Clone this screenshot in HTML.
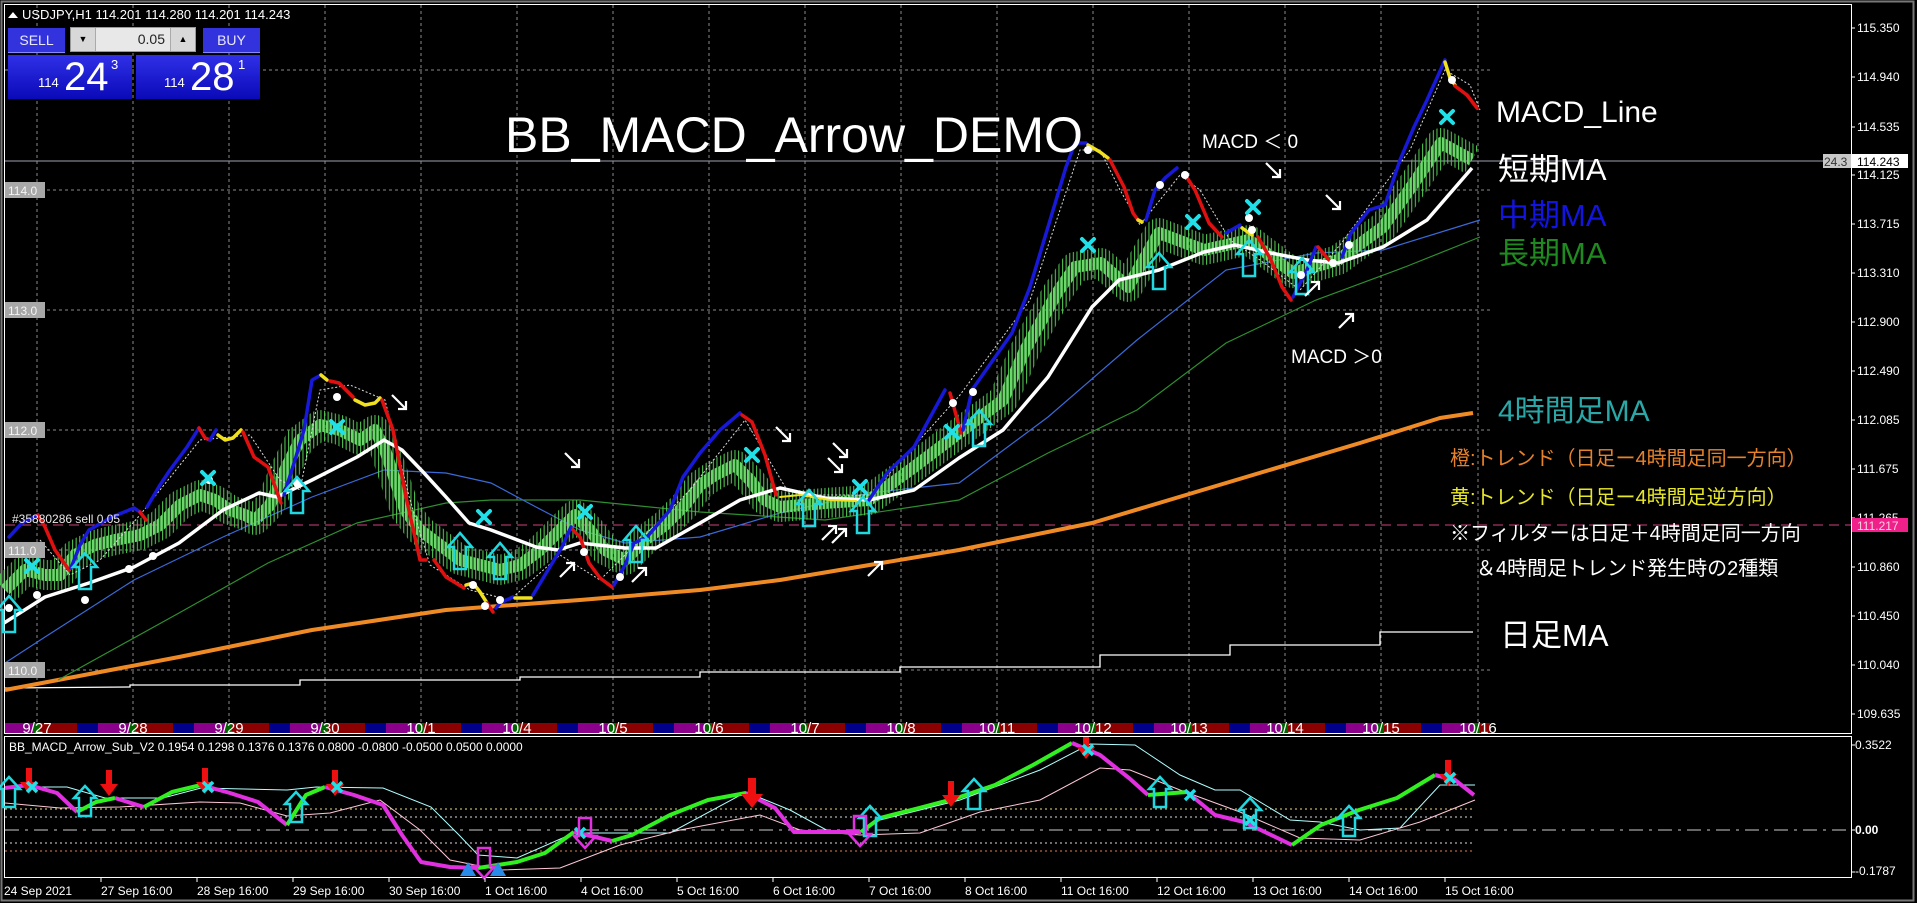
<!DOCTYPE html>
<html><head><meta charset="utf-8">
<style>
html,body{margin:0;padding:0;background:#000;width:1917px;height:903px;overflow:hidden}
svg{position:absolute;left:0;top:0}
.t{font-family:"Liberation Sans","Noto Sans CJK JP",sans-serif}
#panel{position:absolute;left:8px;top:27px;width:252px;height:72px;font-family:"Liberation Sans",sans-serif}
.btn{position:absolute;background:#3333dd;color:#e8e8ff;font-size:14px;text-align:center;line-height:24px;border-bottom:1px solid #8888ff}
.big{position:absolute;top:28px;height:44px;background:linear-gradient(#3030e8,#0a0ab8);color:#fff}
</style></head><body>
<svg width="1917" height="903" viewBox="0 0 1917 903" xmlns="http://www.w3.org/2000/svg">
<defs>
<pattern id="band" x="2" y="0" width="96" height="20" patternUnits="userSpaceOnUse">
<rect x="0" y="0" width="31" height="20" fill="#8a008a"/>
<rect x="31" y="0" width="7" height="20" fill="#006400"/>
<rect x="38" y="0" width="37" height="20" fill="#8b0000"/>
<rect x="75" y="0" width="21" height="20" fill="#00008b"/>
</pattern>
<pattern id="vs" x="0" y="0" width="3.6" height="7" patternUnits="userSpaceOnUse">
<rect x="0" y="0" width="1.1" height="7" fill="#4fbf4f"/>
</pattern>
<pattern id="vs2" x="1.8" y="0" width="3.6" height="9" patternUnits="userSpaceOnUse">
<rect x="0" y="0" width="2.2" height="9" fill="#6ad86a"/>
</pattern>
</defs>
<rect x="4.5" y="4.5" width="1847" height="729" fill="none" stroke="#fff" stroke-width="1"/>
<rect x="4.5" y="736.5" width="1847" height="141" fill="none" stroke="#fff" stroke-width="1"/>
<rect x="1.5" y="1.5" width="1912" height="899" fill="none" stroke="#777" stroke-width="2"/>
<g stroke="#8a8a8a" stroke-width="1" stroke-dasharray="3,3">
<line x1="37" y1="5" x2="37" y2="722"/><line x1="133" y1="5" x2="133" y2="722"/><line x1="229" y1="5" x2="229" y2="722"/><line x1="325" y1="5" x2="325" y2="722"/><line x1="421" y1="5" x2="421" y2="722"/><line x1="517" y1="5" x2="517" y2="722"/><line x1="613" y1="5" x2="613" y2="722"/><line x1="709" y1="5" x2="709" y2="722"/><line x1="805" y1="5" x2="805" y2="722"/><line x1="901" y1="5" x2="901" y2="722"/><line x1="997" y1="5" x2="997" y2="722"/><line x1="1093" y1="5" x2="1093" y2="722"/><line x1="1189" y1="5" x2="1189" y2="722"/><line x1="1285" y1="5" x2="1285" y2="722"/><line x1="1381" y1="5" x2="1381" y2="722"/><line x1="1478" y1="5" x2="1478" y2="722"/>
<line x1="5" y1="70" x2="1490" y2="70"/><line x1="5" y1="190" x2="1490" y2="190"/><line x1="5" y1="310" x2="1490" y2="310"/><line x1="5" y1="430" x2="1490" y2="430"/><line x1="5" y1="550" x2="1490" y2="550"/><line x1="5" y1="670" x2="1490" y2="670"/>
</g>
<line x1="5" y1="161" x2="1851" y2="161" stroke="#a0a0b0" stroke-width="1"/>
<line x1="5" y1="525" x2="1851" y2="525" stroke="#d04080" stroke-width="1" stroke-dasharray="10,6"/>
<rect x="5" y="723" width="1485" height="10" fill="url(#band)"/>
<polyline fill="none" stroke="#fff" stroke-width="1.3" points="5,688 130,687 130,685 300,685 300,680 520,680 520,677 700,677 700,672 900,672 900,667 1100,667 1100,655 1230,655 1230,645 1380,645 1380,632 1473,632"/>
<polyline fill="none" stroke="#f08a24" stroke-width="4" stroke-linejoin="round" points="5,690 58,680 179,657 312,630 446,610 580,600 700,590 780,580 959,550 1092,523 1226,483 1360,443 1440,418 1473,413"/>
<polyline fill="none" stroke="#2f8f2f" stroke-width="1.2" points="58,680 179,613 268,563 357,523 446,503 491,500 580,500 700,512 825,520 959,500 1048,453 1137,410 1226,343 1316,300 1405,267 1480,237"/>
<polyline fill="none" stroke="#3a6ad8" stroke-width="1.2" points="5,663 45,637 134,580 223,537 312,497 384,470 446,473 491,483 536,507 580,530 625,543 700,537 780,513 869,493 959,483 1048,417 1137,340 1226,270 1316,253 1383,250 1480,220"/>
<polyline fill="none" stroke="url(#vs)" stroke-width="30" stroke-linejoin="round" points="5,590 25,570 45,575 60,575 75,555 95,545 115,540 140,535 160,525 180,505 200,495 215,500 230,510 245,515 255,520 270,505 285,470 300,440 320,425 340,430 360,440 375,430 385,450 395,480 405,510 420,530 440,545 460,560 480,565 500,570 520,565 540,550 560,530 575,515 590,530 605,550 625,560 645,540 665,525 685,505 700,485 715,475 735,465 750,480 765,500 780,507 825,503 869,500 914,467 959,433 1003,400 1025,350 1057,293 1075,267 1101,263 1128,287 1159,233 1204,250 1249,240 1293,273 1338,260 1383,227 1414,183 1441,143 1472,160"/>
<polyline fill="none" stroke="url(#vs2)" stroke-width="12" stroke-linejoin="round" points="5,590 25,570 45,575 60,575 75,555 95,545 115,540 140,535 160,525 180,505 200,495 215,500 230,510 245,515 255,520 270,505 285,470 300,440 320,425 340,430 360,440 375,430 385,450 395,480 405,510 420,530 440,545 460,560 480,565 500,570 520,565 540,550 560,530 575,515 590,530 605,550 625,560 645,540 665,525 685,505 700,485 715,475 735,465 750,480 765,500 780,507 825,503 869,500 914,467 959,433 1003,400 1025,350 1057,293 1075,267 1101,263 1128,287 1159,233 1204,250 1249,240 1293,273 1338,260 1383,227 1414,183 1441,143 1472,160"/>
<polyline fill="none" stroke="#fff" stroke-width="3.5" stroke-linejoin="round" points="4,623 45,597 89,583 134,567 179,543 223,510 259,493 277,497 312,480 357,457 384,440 402,450 424,473 446,497 469,523 491,530 536,547 558,550 580,543 625,548 656,548 700,523 740,500 780,488 825,498 869,500 914,490 959,458 1003,430 1048,377 1092,307 1119,280 1159,270 1204,252 1235,245 1271,253 1307,260 1338,263 1383,247 1427,220 1472,168"/>
<polyline fill="none" stroke="#ddd" stroke-width="1" stroke-dasharray="2,2" points="40,540 70,575 100,560 140,515 200,440 250,435 280,480 300,490 320,390 350,385 385,400 410,500 430,565 470,590 510,600 560,555 600,580 640,540 690,490 745,420 790,495 870,495 960,395 1030,300 1080,150 1100,150 1120,190 1140,225 1180,175 1200,190 1230,240 1260,260 1300,290 1340,245 1410,150 1445,70 1470,85 1480,110"/>
<g fill="none" stroke-width="3.5" stroke-linejoin="round" stroke-linecap="round">
<polyline stroke="#1818d8" points="9,537 22,523 38,515"/>
<polyline stroke="#e01010" points="38,515 45,527 55,550 69,570"/>
<polyline stroke="#1818d8" points="71,568 80,545 89,530 112,517 134,508 140,512"/>
<polyline stroke="#e01010" points="140,512 146,520"/>
<polyline stroke="#1818d8" points="147,507 160,485 170,470 187,447 199,428"/>
<polyline stroke="#e01010" points="199,428 205,438 210,440"/>
<polyline stroke="#1818d8" points="210,440 216,430"/>
<polyline stroke="#f0e020" points="218,435 225,440 233,438 241,430"/>
<polyline stroke="#e01010" points="243,432 254,457 268,467 281,503"/>
<polyline stroke="#1818d8" points="284,495 295,460 304,430 312,380 321,375"/>
<polyline stroke="#f0e020" points="321,375 327,380"/>
<polyline stroke="#e01010" points="330,381 339,383 353,397"/>
<polyline stroke="#f0e020" points="355,400 365,405 375,403 380,398"/>
<polyline stroke="#e01010" points="382,400 393,430 406,497 420,560 426,560"/>
<polyline stroke="#e01010" points="434,560 446,577 464,588"/>
<polyline stroke="#f0e020" points="466,585 473,583 480,592 487,603"/>
<polyline stroke="#e01010" points="487,603 493,612"/>
<polyline stroke="#1818d8" points="496,608 500,603 513,597"/>
<polyline stroke="#f0e020" points="515,598 531,598"/>
<polyline stroke="#1818d8" points="533,595 545,575 562,547 571,527"/>
<polyline stroke="#e01010" points="573,530 580,537 589,563 600,578 612,587"/>
<polyline stroke="#1818d8" points="614,585 625,565 634,543 647,537 670,510 683,477 700,453 720,430 740,413"/>
<polyline stroke="#e01010" points="742,415 752,422 765,455 776,495"/>
<polyline stroke="#f0e020" points="780,497 800,495 830,500 856,501" stroke-width="2"/>
<polyline stroke="#1818d8" points="869,500 887,473 914,447 945,390"/>
<polyline stroke="#e01010" points="950,393 961,433"/>
<polyline stroke="#1818d8" points="963,430 972,390 1012,333 1030,287 1048,227 1066,167 1075,143 1086,143"/>
<polyline stroke="#f0e020" points="1088,145 1100,152 1108,158"/>
<polyline stroke="#e01010" points="1110,160 1124,187 1133,213 1138,220"/>
<polyline stroke="#f0e020" points="1138,220 1142,222"/>
<polyline stroke="#1818d8" points="1146,220 1155,190 1165,178 1177,168"/>
<polyline stroke="#e01010" points="1184,173 1195,190 1209,223 1222,237"/>
<polyline stroke="#1818d8" points="1226,233 1240,225"/>
<polyline stroke="#f0e020" points="1242,228 1252,235"/>
<polyline stroke="#e01010" points="1258,237 1271,260 1282,287 1291,300"/>
<polyline stroke="#1818d8" points="1293,297 1307,270 1316,247"/>
<polyline stroke="#e01010" points="1318,247 1329,260"/>
<polyline stroke="#1818d8" points="1342,257 1351,233 1369,210 1385,205 1400,160 1414,127 1427,100 1445,60"/>
<polyline stroke="#f0e020" points="1445,62 1450,78 1455,85"/>
<polyline stroke="#e01010" points="1455,86 1467,95 1477,108"/>
</g>
<g fill="#fff">
<circle cx="9" cy="608" r="4"/><circle cx="37" cy="595" r="4"/><circle cx="85" cy="600" r="4"/><circle cx="129" cy="569" r="4"/><circle cx="153" cy="556" r="4"/><circle cx="209" cy="480" r="4"/><circle cx="297" cy="483" r="4"/><circle cx="337" cy="397" r="4"/><circle cx="473" cy="585" r="4"/><circle cx="485" cy="606" r="4"/><circle cx="500" cy="600" r="4"/><circle cx="620" cy="577" r="4"/><circle cx="584" cy="552" r="4"/><circle cx="953" cy="403" r="4"/><circle cx="973" cy="392" r="4"/><circle cx="1088" cy="150" r="4"/><circle cx="1160" cy="185" r="4"/><circle cx="1185" cy="175" r="4"/><circle cx="1249" cy="218" r="4"/><circle cx="1252" cy="230" r="4"/><circle cx="1301" cy="275" r="4"/><circle cx="1349" cy="245" r="4"/><circle cx="1333" cy="263" r="4"/><circle cx="1452" cy="80" r="4"/>
</g>
<g stroke="#20e0e8" stroke-width="4" stroke-linecap="round">
<path d="M26,560l12,12M38,560l-12,12"/><path d="M202,472l12,12M214,472l-12,12"/><path d="M331,421l12,12M343,421l-12,12"/><path d="M478,511l12,12M490,511l-12,12"/><path d="M579,506l12,12M591,506l-12,12"/><path d="M746,449l12,12M758,449l-12,12"/><path d="M854,481l12,12M866,481l-12,12"/><path d="M946,426l12,12M958,426l-12,12"/><path d="M1082,239l12,12M1094,239l-12,12"/><path d="M1187,216l12,12M1199,216l-12,12"/><path d="M1247,201l12,12M1259,201l-12,12"/><path d="M1441,111l12,12M1453,111l-12,12"/>
</g>
<g fill="none" stroke="#20d8e0" stroke-width="2.5">
<path d="M0,0 l12,14 h-6 v22 h-12 v-22 h-6 z" transform="translate(9,596)"/>
<path d="M0,0 l12,14 h-6 v22 h-12 v-22 h-6 z" transform="translate(85,553)"/>
<path d="M0,0 l12,14 h-6 v22 h-12 v-22 h-6 z" transform="translate(297,477)"/>
<path d="M0,0 l12,14 h-6 v22 h-12 v-22 h-6 z" transform="translate(460,533)"/>
<path d="M0,0 l12,14 h-6 v22 h-12 v-22 h-6 z" transform="translate(500,543)"/>
<path d="M0,0 l12,14 h-6 v22 h-12 v-22 h-6 z" transform="translate(636,526)"/>
<path d="M0,0 l12,14 h-6 v22 h-12 v-22 h-6 z" transform="translate(809,490)"/>
<path d="M0,0 l12,14 h-6 v22 h-12 v-22 h-6 z" transform="translate(863,497)"/>
<path d="M0,0 l12,14 h-6 v22 h-12 v-22 h-6 z" transform="translate(979,410)"/>
<path d="M0,0 l12,14 h-6 v22 h-12 v-22 h-6 z" transform="translate(1159,253)"/>
<path d="M0,0 l12,14 h-6 v22 h-12 v-22 h-6 z" transform="translate(1249,240)"/>
<path d="M0,0 l12,14 h-6 v22 h-12 v-22 h-6 z" transform="translate(1302,258)"/>
</g>
<g stroke="#fff" stroke-width="2.2" fill="none">
<path d="M392,395l14,14m0,-8v8h-8"/><path d="M565,453l14,14m0,-8v8h-8"/><path d="M776,427l14,14m0,-8v8h-8"/><path d="M833,443l14,14m0,-8v8h-8"/><path d="M828,458l14,14m0,-8v8h-8"/><path d="M1266,163l14,14m0,-8v8h-8"/><path d="M1326,195l14,14m0,-8v8h-8"/>
<path d="M560,577l14,-14m-8,0h8v8"/><path d="M632,582l14,-14m-8,0h8v8"/><path d="M822,540l14,-14m-8,0h8v8"/><path d="M832,543l14,-14m-8,0h8v8"/><path d="M868,576l14,-14m-8,0h8v8"/><path d="M1305,296l14,-14m-8,0h8v8"/><path d="M1339,328l14,-14m-8,0h8v8"/>
</g>
<g class="t" font-size="12">
<rect x="5" y="182" width="40" height="16" fill="#a8a8a8"/><text x="8" y="195" fill="#f4f4f4">114.0</text>
<rect x="5" y="302" width="40" height="16" fill="#a8a8a8"/><text x="8" y="315" fill="#f4f4f4">113.0</text>
<rect x="5" y="422" width="40" height="16" fill="#a8a8a8"/><text x="8" y="435" fill="#f4f4f4">112.0</text>
<rect x="5" y="542" width="40" height="16" fill="#a8a8a8"/><text x="8" y="555" fill="#f4f4f4">111.0</text>
<rect x="5" y="662" width="40" height="16" fill="#a8a8a8"/><text x="8" y="675" fill="#f4f4f4">110.0</text>
<text x="12" y="523" fill="#e8e8e8">#35880286 sell 0.05</text>
</g>
<g class="t" font-size="15" fill="#fff" text-anchor="middle">
<text x="37" y="733">9/27</text><text x="133" y="733">9/28</text><text x="229" y="733">9/29</text><text x="325" y="733">9/30</text><text x="421" y="733">10/1</text><text x="517" y="733">10/4</text><text x="613" y="733">10/5</text><text x="709" y="733">10/6</text><text x="805" y="733">10/7</text><text x="901" y="733">10/8</text><text x="997" y="733">10/11</text><text x="1093" y="733">10/12</text><text x="1189" y="733">10/13</text><text x="1285" y="733">10/14</text><text x="1381" y="733">10/15</text><text x="1478" y="733">10/16</text>
</g>
<g class="t" font-size="12" fill="#fff">
<g stroke="#fff"><line x1="1851" y1="28" x2="1855" y2="28"/><line x1="1851" y1="77" x2="1855" y2="77"/><line x1="1851" y1="127" x2="1855" y2="127"/><line x1="1851" y1="175" x2="1855" y2="175"/><line x1="1851" y1="224" x2="1855" y2="224"/><line x1="1851" y1="273" x2="1855" y2="273"/><line x1="1851" y1="322" x2="1855" y2="322"/><line x1="1851" y1="371" x2="1855" y2="371"/><line x1="1851" y1="420" x2="1855" y2="420"/><line x1="1851" y1="469" x2="1855" y2="469"/><line x1="1851" y1="518" x2="1855" y2="518"/><line x1="1851" y1="567" x2="1855" y2="567"/><line x1="1851" y1="616" x2="1855" y2="616"/><line x1="1851" y1="665" x2="1855" y2="665"/><line x1="1851" y1="714" x2="1855" y2="714"/><line x1="1851" y1="745" x2="1855" y2="745"/><line x1="1851" y1="830" x2="1855" y2="830"/><line x1="1851" y1="872" x2="1855" y2="872"/></g>
<text x="1857" y="32">115.350</text><text x="1857" y="81">114.940</text><text x="1857" y="131">114.535</text><text x="1857" y="179">114.125</text><text x="1857" y="228">113.715</text><text x="1857" y="277">113.310</text><text x="1857" y="326">112.900</text><text x="1857" y="375">112.490</text><text x="1857" y="424">112.085</text><text x="1857" y="473">111.675</text><text x="1857" y="522">111.265</text><text x="1857" y="571">110.860</text><text x="1857" y="620">110.450</text><text x="1857" y="669">110.040</text><text x="1857" y="718">109.635</text>
<rect x="1823" y="154" width="28" height="14" fill="#c8c8c8"/><text x="1824" y="166" fill="#333">24.3</text>
<rect x="1852" y="154" width="56" height="14" fill="#fff"/><text x="1857" y="166" fill="#000">114.243</text>
<rect x="1852" y="518" width="56" height="14" fill="#f0208a"/><text x="1857" y="530" fill="#ffd0e0">111.217</text>
<text x="1855" y="749">0.3522</text><text x="1855" y="834" font-weight="bold">0.00</text><text x="1855" y="875">-0.1787</text>
</g>
<g stroke-width="1">
<line x1="5" y1="809" x2="1475" y2="809" stroke="#f0e080" stroke-dasharray="2,3"/>
<line x1="5" y1="817" x2="1475" y2="817" stroke="#ddd" stroke-dasharray="2,3"/>
<line x1="5" y1="830" x2="1851" y2="830" stroke="#ccc" stroke-dasharray="14,6,3,6"/>
<line x1="5" y1="843" x2="1475" y2="843" stroke="#ddd" stroke-dasharray="2,3"/>
<line x1="5" y1="851" x2="1475" y2="851" stroke="#e08050" stroke-dasharray="2,3"/>
</g>
<polyline fill="none" stroke="#b0ffff" stroke-width="1" points="5,787 67,787 105,798 163,798 201,788 287,790 316,787 383,788 431,807 459,835 478,855 517,858 574,833 670,833 746,792 790,810 830,832 860,832 880,820 960,800 1040,770 1090,744 1135,745 1180,775 1215,790 1240,790 1290,820 1320,822 1360,830 1400,828 1440,785 1475,785"/>
<polyline fill="none" stroke="#ffc8d8" stroke-width="1" points="5,803 60,808 120,807 200,802 240,803 287,816 330,813 380,800 420,830 450,860 500,870 560,868 620,845 680,830 760,815 800,830 860,835 920,833 980,812 1040,800 1100,768 1130,770 1180,790 1240,812 1300,838 1360,840 1420,822 1475,800"/>
<g fill="none" stroke-width="4" stroke-linejoin="round">
<polyline stroke="#e030e0" points="5,788 29,785 57,793 77,812"/>
<polyline stroke="#30f020" points="77,812 96,802 115,798"/>
<polyline stroke="#e030e0" points="115,798 144,807"/>
<polyline stroke="#30f020" points="144,807 172,792 201,785"/>
<polyline stroke="#e030e0" points="201,785 230,793 258,802 287,825"/>
<polyline stroke="#30f020" points="287,825 306,795 325,787"/>
<polyline stroke="#e030e0" points="325,787 354,795 383,805 402,835 421,862 450,867 478,868"/>
<polyline stroke="#30f020" points="478,868 517,862 545,853 574,832"/>
<polyline stroke="#e030e0" points="574,832 612,841"/>
<polyline stroke="#30f020" points="612,841 632,835 670,815 708,800 746,793"/>
<polyline stroke="#e030e0" points="746,793 775,808 794,832 832,832 861,832"/>
<polyline stroke="#30f020" points="861,832 880,818 919,808 957,798 995,785 1033,765 1072,743"/>
<polyline stroke="#e030e0" points="1072,743 1100,755 1129,778 1148,795"/>
<polyline stroke="#30f020" points="1148,795 1187,792"/>
<polyline stroke="#e030e0" points="1187,792 1215,815 1244,822 1292,845"/>
<polyline stroke="#30f020" points="1292,845 1321,825 1359,810 1397,798 1435,775"/>
<polyline stroke="#e030e0" points="1435,775 1455,780 1474,795"/>
</g>
<g fill="#ee1010">
<path d="M26,768h6v14h6l-9,12l-9,-12h6z"/><path d="M106,770h6v14h6l-9,12l-9,-12h6z"/><path d="M202,768h6v14h6l-9,12l-9,-12h6z"/><path d="M332,770h6v14h6l-9,12l-9,-12h6z"/><path d="M748,778h8v16h7l-11,14l-11,-14h7z"/><path d="M948,781h6v14h6l-9,12l-9,-12h6z"/><path d="M1083,737h6v10h6l-9,12l-9,-12h6z"/><path d="M1445,760h6v14h6l-9,12l-9,-12h6z"/>
</g>
<g stroke="#20e0e8" stroke-width="3.5">
<path d="M27,782l10,10M37,782l-10,10"/><path d="M203,782l10,10M213,782l-10,10"/><path d="M332,782l10,10M342,782l-10,10"/><path d="M1083,745l10,10M1093,745l-10,10"/><path d="M1185,790l10,10M1195,790l-10,10"/><path d="M1245,815l10,10M1255,815l-10,10"/><path d="M1445,773l10,10M1455,773l-10,10"/><path d="M575,828l10,10M585,828l-10,10"/>
</g>
<g fill="none" stroke="#20d8e0" stroke-width="2.5">
<path d="M0,0 l11,12 h-5 v18 h-12 v-18 h-5 z" transform="translate(85,786)"/>
<path d="M0,0 l11,12 h-5 v18 h-12 v-18 h-5 z" transform="translate(296,792)"/>
<path d="M0,0 l11,12 h-5 v18 h-12 v-18 h-5 z" transform="translate(974,779)"/>
<path d="M0,0 l11,12 h-5 v18 h-12 v-18 h-5 z" transform="translate(870,806)"/>
<path d="M0,0 l11,12 h-5 v18 h-12 v-18 h-5 z" transform="translate(1160,777)"/>
<path d="M0,0 l11,12 h-5 v18 h-12 v-18 h-5 z" transform="translate(1250,798)"/>
<path d="M0,0 l11,12 h-5 v18 h-12 v-18 h-5 z" transform="translate(1349,806)"/>
<path d="M0,0 l11,12 h-5 v18 h-12 v-18 h-5 z" transform="translate(9,777)"/>
</g>
<g fill="none" stroke="#e030e0" stroke-width="2.5">
<path d="M0,0 l-11,-12 h5 v-18 h12 v18 h5 z" transform="translate(585,848)"/>
<path d="M0,0 l-11,-12 h5 v-18 h12 v18 h5 z" transform="translate(860,846)"/>
<path d="M0,0 l-11,-12 h5 v-18 h12 v18 h5 z" transform="translate(484,878)"/>
</g>
<g fill="#2a8ae8"><path d="M460,876l8,-14l8,14z"/><path d="M490,876l8,-14l8,14z"/></g>
<text class="t" x="9" y="751" font-size="12" fill="#fff">BB_MACD_Arrow_Sub_V2 0.1954 0.1298 0.1376 0.1376 0.0800 -0.0800 -0.0500 0.0500 0.0000</text>
<g stroke="#fff"><line x1="101" y1="878" x2="101" y2="882"/><line x1="197" y1="878" x2="197" y2="882"/><line x1="293" y1="878" x2="293" y2="882"/><line x1="389" y1="878" x2="389" y2="882"/><line x1="485" y1="878" x2="485" y2="882"/><line x1="581" y1="878" x2="581" y2="882"/><line x1="677" y1="878" x2="677" y2="882"/><line x1="773" y1="878" x2="773" y2="882"/><line x1="869" y1="878" x2="869" y2="882"/><line x1="965" y1="878" x2="965" y2="882"/><line x1="1061" y1="878" x2="1061" y2="882"/><line x1="1157" y1="878" x2="1157" y2="882"/><line x1="1253" y1="878" x2="1253" y2="882"/><line x1="1349" y1="878" x2="1349" y2="882"/><line x1="1445" y1="878" x2="1445" y2="882"/></g>
<g class="t" font-size="12" fill="#fff">
<text x="4" y="895">24 Sep 2021</text><text x="101" y="895">27 Sep 16:00</text><text x="197" y="895">28 Sep 16:00</text><text x="293" y="895">29 Sep 16:00</text><text x="389" y="895">30 Sep 16:00</text><text x="485" y="895">1 Oct 16:00</text><text x="581" y="895">4 Oct 16:00</text><text x="677" y="895">5 Oct 16:00</text><text x="773" y="895">6 Oct 16:00</text><text x="869" y="895">7 Oct 16:00</text><text x="965" y="895">8 Oct 16:00</text><text x="1061" y="895">11 Oct 16:00</text><text x="1157" y="895">12 Oct 16:00</text><text x="1253" y="895">13 Oct 16:00</text><text x="1349" y="895">14 Oct 16:00</text><text x="1445" y="895">15 Oct 16:00</text>
</g>
<path d="M8,18l5,-6l5,6z" fill="#fff"/>
<text class="t" x="22" y="19" font-size="13" fill="#fff">USDJPY,H1  114.201 114.280 114.201 114.243</text>
<g class="t">
<text x="505" y="152" font-size="50" fill="#fff">BB_MACD_Arrow_DEMO</text>
<text x="1202" y="148" font-size="19" fill="#fff">MACD ＜ 0</text>
<text x="1291" y="363" font-size="19" fill="#fff">MACD ＞0</text>
<text x="1496" y="122" font-size="30" fill="#fff">MACD_Line</text>
<text x="1498" y="180" font-size="31" fill="#fff">短期MA</text>
<text x="1498" y="226" font-size="31" fill="#1414e0">中期MA</text>
<text x="1498" y="264" font-size="31" fill="#1f8a1f">長期MA</text>
<text x="1498" y="421" font-size="30" fill="#2aa8a8">4時間足MA</text>
<text x="1450" y="465" font-size="20" fill="#e8822a">橙:トレンド（日足ー4時間足同一方向）</text>
<text x="1450" y="504" font-size="20" fill="#e8e82a">黄:トレンド（日足ー4時間足逆方向）</text>
<text x="1450" y="540" font-size="20" fill="#fff">※フィルターは日足＋4時間足同一方向</text>
<text x="1476" y="575" font-size="20" fill="#fff">＆4時間足トレンド発生時の2種類</text>
<text x="1500" y="646" font-size="31" fill="#fff">日足MA</text>
</g>
</svg>
<div id="panel">
<div class="btn" style="left:0;top:1px;width:57px;height:24px">SELL</div>
<div style="position:absolute;left:62px;top:0;width:126px;height:25px;background:#e8e8e8;border:1px solid #999;box-sizing:border-box;font-size:14px">
<div style="position:absolute;left:0;top:0;width:24px;height:23px;background:#d8d8d8;border-right:1px solid #aaa;text-align:center;font-size:9px;line-height:23px">▼</div>
<div style="position:absolute;right:30px;top:3px;color:#222">0.05</div>
<div style="position:absolute;right:0;top:0;width:24px;height:23px;background:#d8d8d8;border-left:1px solid #aaa;text-align:center;font-size:9px;line-height:23px">▲</div>
</div>
<div class="btn" style="left:195px;top:1px;width:57px;height:24px">BUY</div>
<div class="big" style="left:0;width:124px"><span style="position:absolute;left:30px;top:20px;font-size:13px">114</span><span style="position:absolute;left:56px;top:0;font-size:40px;line-height:44px">24</span><span style="position:absolute;left:103px;top:2px;font-size:13px">3</span></div>
<div class="big" style="left:128px;width:124px"><span style="position:absolute;left:28px;top:20px;font-size:13px">114</span><span style="position:absolute;left:54px;top:0;font-size:40px;line-height:44px">28</span><span style="position:absolute;left:102px;top:2px;font-size:13px">1</span></div>
</div>
</body></html>
